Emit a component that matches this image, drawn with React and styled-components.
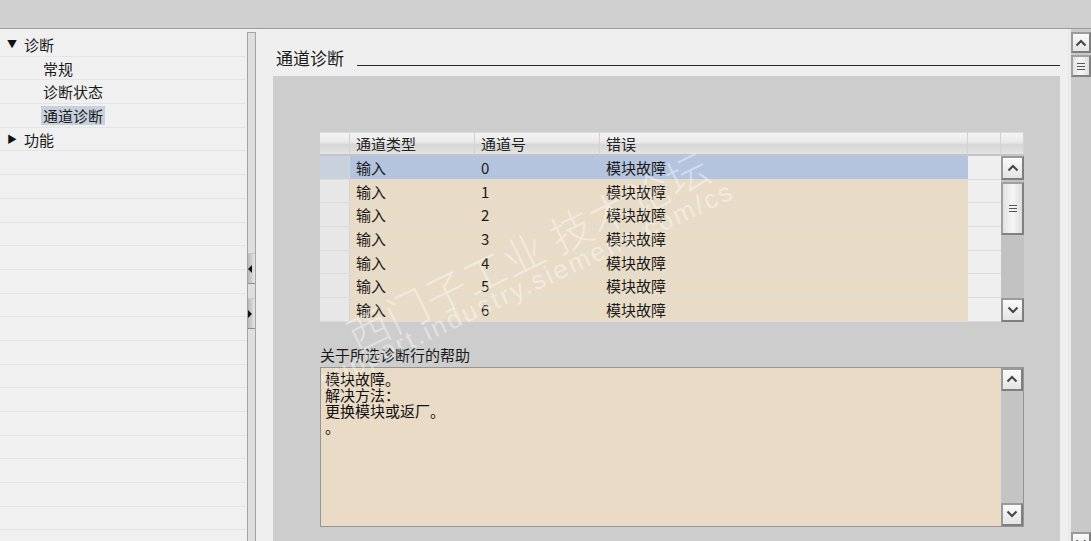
import React from 'react';
import styled, { createGlobalStyle } from 'styled-components';

const GlobalStyle = createGlobalStyle`
  html, body {
    margin: 0;
    padding: 0;
    overflow: hidden;
  }
  body {
    font-family: "Noto Sans CJK SC", "Noto Sans", "Liberation Sans", sans-serif;
    font-size: 15px;
    color: #1a1a1a;
  }
`;

const Page = styled.div`
  width: 1091px;
  height: 541px;
  display: flex;
  flex-direction: column;
  background: #efefef;
  overflow: hidden;
`;

const TopBar = styled.div`
  height: 28px;
  flex-shrink: 0;
  background: #d0d0d0;
  border-bottom: 1px solid #9c9c9c;
`;

const Main = styled.div`
  flex: 1;
  display: flex;
  min-height: 0;
`;

const Sidebar = styled.div`
  width: 246px;
  flex-shrink: 0;
  background: #f0f0f0;
  padding-top: 4px;
  box-sizing: border-box;
  overflow: hidden;
`;

const TreeRow = styled.div`
  height: 23.7px;
  box-sizing: border-box;
  border-bottom: 1px solid #e4e4e4;
  display: flex;
  align-items: center;
  padding-left: ${p => (p.$child ? 41 : 7)}px;
  line-height: 1;
`;

const Caret = styled.span`
  width: 15px;
  font-size: 10px;
  color: #111;
`;

const Label = styled.span`
  padding: 2px 2px;
  background: ${p => (p.$selected ? '#c6d1dd' : 'transparent')};
`;

const Splitter = styled.div`
  width: 12px;
  flex-shrink: 0;
  background: #f0f0f0;
  padding-top: 3px;
  box-sizing: border-box;
`;

const SplitBar = styled.div`
  margin-left: 1px;
  width: 9px;
  height: 100%;
  box-sizing: border-box;
  border: 1px solid #a4a4a4;
  border-bottom: none;
  background: #dedede;
  display: flex;
  flex-direction: column;
  padding-top: 220px;
  gap: 14px;
`;

const SplitButton = styled.div`
  height: 29px;
  background: linear-gradient(to right, #b8b8b8, #e6e6e6);
  border-bottom: 1px solid #8e8e8e;
  border-top: 1px solid #c8c8c8;
  display: flex;
  align-items: center;
  &::after {
    content: '';
    width: 0;
    height: 0;
    border-top: 4px solid transparent;
    border-bottom: 4px solid transparent;
    ${p => (p.$dir === 'left' ? 'border-right: 4px solid #111;' : 'border-left: 4px solid #111;')}
  }
`;

const Content = styled.div`
  flex: 1;
  display: flex;
  flex-direction: column;
  padding-left: 15px;
  padding-right: 8px;
  min-width: 0;
  background: #efefef;
`;

const TitleRow = styled.div`
  height: 47px;
  display: flex;
  align-items: center;
  gap: 13px;
  padding-left: 3px;
  padding-top: 10px;
  box-sizing: border-box;
  font-size: 17px;
`;

const TitleLine = styled.div`
  flex: 1;
  height: 1px;
  background: #2a2a2a;
  margin-top: 16px;
`;

const Panel = styled.div`
  flex: 1;
  position: relative;
  background: #cdcdcd;
  padding: 56px 36px 0 47px;
  overflow: hidden;
`;

const Table = styled.div`
  position: relative;
  z-index: 0;
  width: 704px;
  display: grid;
  grid-template-columns: 30px 125px 125px 368px 33px 23px;
  grid-template-rows: 24px repeat(7, 23.7px);
`;

const HeadCell = styled.div`
  box-sizing: border-box;
  background: linear-gradient(to bottom, #f4f4f4 0%, #e8e8e8 45%, #d6d6d6 55%, #e4e4e4 100%);
  border-right: 1px solid #d2d2d2;
  border-top: 1px solid #dadada;
  border-bottom: 2px solid #c4c4c4;
  padding-left: 6px;
  display: flex;
  align-items: center;
  color: #222;
  line-height: 1;
`;

const Cell = styled.div`
  box-sizing: border-box;
  border-bottom: 1px solid #dcdcdc;
  padding-left: 6px;
  display: flex;
  align-items: center;
  line-height: 1;
  background: ${p =>
    p.$kind === 'rowhead'
      ? p.$selected ? '#c9d1dc' : '#e7e7e7'
      : p.$kind === 'empty'
      ? '#efefef'
      : p.$selected ? '#b4c3de' : '#e9dcc6'};
  border-right: ${p => (p.$kind === 'rowhead' ? '1px solid #d6d6d6' : 'none')};
`;

const VScroll = styled.div`
  grid-column: 6;
  grid-row: 2 / span 7;
  background: #c2c2c2;
  display: flex;
  flex-direction: column;
  justify-content: space-between;
  position: relative;
`;

const ScrollButton = styled.div`
  height: ${p => p.$h || 23}px;
  flex-shrink: 0;
  box-sizing: border-box;
  border: 2px solid #8f8f8f;
  border-color: #9a9a9a #7e7e7e #7e7e7e #9a9a9a;
  background: linear-gradient(to bottom, #fafafa, #e4e4e4);
  display: flex;
  align-items: center;
  justify-content: center;
  color: #333;
`;

const Thumb = styled.div`
  position: absolute;
  left: 0;
  right: 0;
  top: ${p => p.$top}px;
  height: ${p => p.$h}px;
  box-sizing: border-box;
  border: 2px solid #8f8f8f;
  border-color: #a0a0a0 #808080 #808080 #a0a0a0;
  background: linear-gradient(to right, #e2e2e2, #f6f6f6 50%, #dedede);
  display: flex;
  align-items: center;
  justify-content: center;
`;

const HelpLabel = styled.div`
  margin-top: 21px;
  height: 24px;
  display: flex;
  align-items: center;
`;

const HelpBox = styled.div`
  width: 704px;
  height: 160px;
  box-sizing: border-box;
  border: 1px solid #959595;
  background: #e9dbc5;
  display: flex;
`;

const HelpText = styled.div`
  flex: 1;
  padding: 3px 4px;
  line-height: 16px;
  white-space: pre;
  color: #111;
`;

const HelpScroll = styled.div`
  width: 22px;
  background: #c4c4c4;
  display: flex;
  flex-direction: column;
  justify-content: space-between;
`;

const PageScroll = styled.div`
  width: 23px;
  flex-shrink: 0;
  background: #c9c9c9;
  border-left: 3px solid #eaeaea;
  box-sizing: border-box;
  padding-top: 3px;
  position: relative;
  display: flex;
  flex-direction: column;
  justify-content: space-between;
  margin-bottom: -12px;
`;

const Watermark = styled.div`
  position: absolute;
  z-index: 1;
  pointer-events: none;
  color: rgba(255, 255, 255, 0.42);
  white-space: nowrap;
  transform-origin: left center;
  left: ${p => p.$x}px;
  top: ${p => p.$y}px;
  font-size: ${p => p.$size}px;
  line-height: ${p => p.$size}px;
  transform: rotate(${p => p.$rot}deg);
  letter-spacing: ${p => p.$ls || 0}px;
  font-family: ${p => (p.$latin ? '"Liberation Sans", sans-serif' : '"Noto Sans CJK SC", sans-serif')};
  font-weight: 300;
`;

const Chevron = ({ dir }) => (
  <svg width="12" height="8" viewBox="0 0 12 8">
    <path
      d={dir === 'up' ? 'M1.5 6.5 L6 2 L10.5 6.5' : 'M1.5 1.5 L6 6 L10.5 1.5'}
      fill="none"
      stroke="#444"
      strokeWidth="2"
    />
  </svg>
);

const Grip = () => (
  <svg width="10" height="9" viewBox="0 0 10 9">
    <path d="M1 1.5H9M1 4.5H9M1 7.5H9" stroke="#555" strokeWidth="1" />
  </svg>
);

const rows = [0, 1, 2, 3, 4, 5, 6];

export default function App() {
  return (
    <Page>
      <GlobalStyle />
      <TopBar />
      <Main>
        <Sidebar>
          <TreeRow>
            <Caret>▼</Caret>
            <Label>诊断</Label>
          </TreeRow>
          <TreeRow $child>
            <Label>常规</Label>
          </TreeRow>
          <TreeRow $child>
            <Label>诊断状态</Label>
          </TreeRow>
          <TreeRow $child>
            <Label $selected>通道诊断</Label>
          </TreeRow>
          <TreeRow>
            <Caret>▶</Caret>
            <Label>功能</Label>
          </TreeRow>
          {Array.from({ length: 17 }).map((_, i) => (
            <TreeRow key={i} />
          ))}
        </Sidebar>
        <Splitter>
          <SplitBar>
            <SplitButton $dir="left" />
            <SplitButton $dir="right" />
          </SplitBar>
        </Splitter>
        <Content>
          <TitleRow>
            <span>通道诊断</span>
            <TitleLine />
          </TitleRow>
          <Panel>
            <Table>
              <HeadCell />
              <HeadCell>通道类型</HeadCell>
              <HeadCell>通道号</HeadCell>
              <HeadCell>错误</HeadCell>
              <HeadCell />
              <HeadCell />
              {rows.map(n => (
                <React.Fragment key={n}>
                  <Cell $kind="rowhead" $selected={n === 0} />
                  <Cell $selected={n === 0}>输入</Cell>
                  <Cell $selected={n === 0}>{n}</Cell>
                  <Cell $selected={n === 0}>模块故障</Cell>
                  <Cell $kind="empty" />
                </React.Fragment>
              ))}
              <VScroll>
                <ScrollButton $h={24}>
                  <Chevron dir="up" />
                </ScrollButton>
                <Thumb $top={26} $h={53}>
                  <Grip />
                </Thumb>
                <ScrollButton $h={24}>
                  <Chevron dir="down" />
                </ScrollButton>
              </VScroll>
            </Table>
            <HelpLabel>关于所选诊断行的帮助</HelpLabel>
            <HelpBox>
              <HelpText>{'模块故障。\n解决方法：\n更换模块或返厂。\n。'}</HelpText>
              <HelpScroll>
                <ScrollButton $h={23}>
                  <Chevron dir="up" />
                </ScrollButton>
                <ScrollButton $h={23}>
                  <Chevron dir="down" />
                </ScrollButton>
              </HelpScroll>
            </HelpBox>
            <Watermark $x={76} $y={240} $size={42} $rot={-26} $ls={1}>
              西门子工业 技术论坛
            </Watermark>
            <Watermark $latin $x={48} $y={292} $size={26} $rot={-25} $ls={2.5}>
              support.industry.siemens.com/cs
            </Watermark>
          </Panel>
        </Content>
        <PageScroll>
          <div>
            <ScrollButton $h={21}>
              <Chevron dir="up" />
            </ScrollButton>
            <Thumb $top={26} $h={22}>
              <Grip />
            </Thumb>
          </div>
          <ScrollButton $h={21}>
            <Chevron dir="down" />
          </ScrollButton>
        </PageScroll>
      </Main>
    </Page>
  );
}
